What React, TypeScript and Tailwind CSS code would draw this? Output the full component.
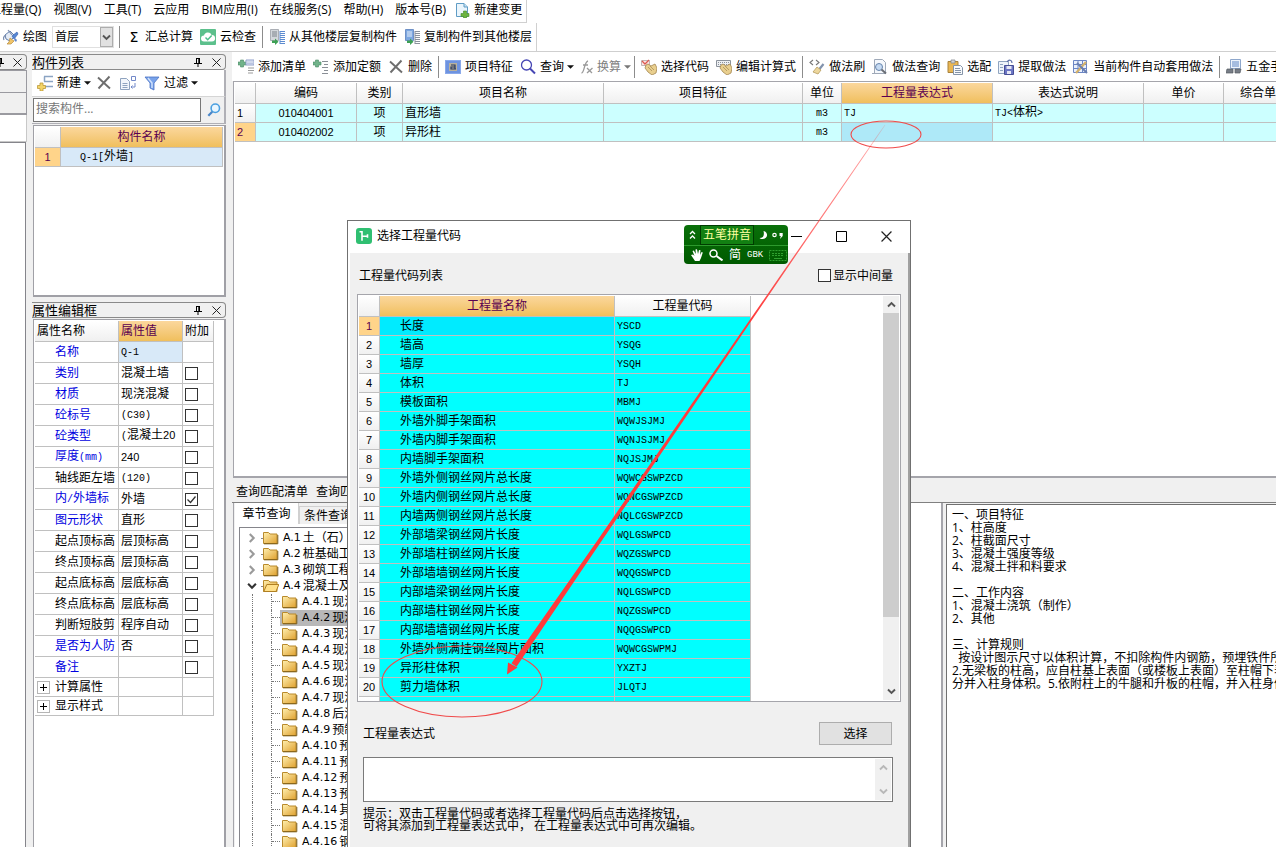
import React from "react";

type IconProps = { children: React.ReactNode; className?: string };

function Ic({ children, className = "h-4 w-4" }: IconProps) {
  return (
    <svg viewBox="0 0 16 16" className={`shrink-0 ${className}`} fill="none" aria-hidden="true">
      {children}
    </svg>
  );
}

const NewDocIcon = () => (
  <Ic>
    <path d="M2.5 1.5h7.5l3.5 3.5v9.500H2.500z" fill="#eaf5fc" stroke="#5f9cc5" />
    <path d="M10 1.500v3.500h3.500" fill="#c5e1f2" stroke="#5f9cc5" />
    <path d="M9.500 9h3v2.500H15v3h-2.500V16h-3v-1.500H7v-3h2.500z" fill="#6cb33f" stroke="#3f8a2a" strokeWidth=".6" />
  </Ic>
);
const DrawIcon = () => (
  <Ic>
    <path d="M2 6l5-4 5 5-5 5-4-2z" fill="#e4ebf5" stroke="#6580ad" />
    <path d="M3 6c-2 1-3 3-2 5M5 1l4 5" stroke="#7c8fb0" strokeWidth="1.200" />
    <path d="M9 7l5-4 1 2-4 5z" fill="#5687d6" stroke="#3b64ad" strokeWidth=".7" />
    <path d="M7 9l4 3-3 3H4l2-2z" fill="#f0c56a" stroke="#b98d3d" strokeWidth=".7" />
    <path d="M12 9l2 2-1 2-2-2z" fill="#5f86c9" />
  </Ic>
);
const CloudCheckIcon = () => (
  <Ic>
    <rect width="16" height="16" rx="1" fill="#5cc08c" />
    <path d="M4 12.500a3 3 0 010-6 4 4 0 017.600-.6A3.300 3.300 0 0112 12.500z" fill="#fff" />
    <path d="M5.500 8.500l2.200 2.200 4-4.200" stroke="#4fbf8b" strokeWidth="1.500" />
  </Ic>
);
const FloorCopyIcon = ({ to = false }: { to?: boolean }) => (
  <Ic>
    <path d="M1.500.5h8v11h-8z" fill={to ? "#7da7e0" : "#d3d7dc"} stroke={to ? "#5a80bd" : "#9a9fa6"} strokeWidth=".8" />
    <path d="M3 3h5M3 5h5M3 7h5" stroke={to ? "#e8f0fb" : "#7d838b"} />
    <path d="M11 2.500h5M11 4.500h5M11 6.500h5M11 8.500h5M11 10.500h5M11 12.500h5M11 14.500h5" stroke={to ? "#8a929c" : "#5d8bd0"} strokeWidth="1.200" />
    <path d="M11 2v13" stroke={to ? "#8a929c" : "#5d8bd0"} />
    <path d="M3 11.500h3v-2l3.500 3.200L6 16v-2H3z" fill="#3ea055" />
  </Ic>
);
const AddListIcon = ({ plain = false }: { plain?: boolean }) => (
  <Ic>
    <path d="M2.500 1h3v2H8v3H5.500v2h-3V6H0V3h2.500z" fill="#71b38a" stroke="#4c8c66" strokeWidth=".6" />
    {plain ? (
      <path d="M9 2.500h6M11 5.500h4M9 8.500h6M11 11.500h4M9 14.500h6" stroke="#8a8f96" strokeWidth="1.200" />
    ) : (
      <>
        <path d="M8 1h8v5H8z" fill="#e7ecf8" stroke="#8f9fca" />
        <path d="M9.500 3h5M9.500 4.500h5" stroke="#8f9fca" strokeDasharray="1 1" />
        <path d="M10 9h6M10 11.500h6M10 14h5" stroke="#9b9b9b" strokeWidth="1.200" />
      </>
    )}
  </Ic>
);
const CrossIcon = () => (
  <Ic>
    <path d="M2 2.500l12 11M13.500 1.500L2.500 13.500" stroke="#6e6e6e" strokeWidth="1.900" />
  </Ic>
);
const FeatureIcon = () => (
  <Ic>
    <rect x=".5" y="1.500" width="15" height="13" fill="#6e93e0" stroke="#8aa9ea" />
    <rect x="4" y="4" width="8" height="8" fill="#b9b19c" />
    <path d="M6 6h4v4M10 8H6v2h5" stroke="#26375f" strokeWidth="1.200" />
  </Ic>
);
const QueryIcon = () => (
  <Ic>
    <circle cx="6.500" cy="6" r="5" stroke="#4646b4" strokeWidth="1.300" />
    <path d="M10 9.500l5 5" stroke="#4646b4" strokeWidth="2" />
  </Ic>
);
const FxIcon = () => (
  <svg viewBox="0 0 12 14" className="h-[14px] w-3 shrink-0" fill="none" aria-hidden="true">
    <path d="M.5 13c3 0 2.500-11 6.500-12M2 5h5" stroke="#9a9a9a" strokeWidth="1.300" />
    <path d="M6 8l5 5M11.500 8l-5.500 5" stroke="#9a9a9a" strokeWidth="1.300" />
  </svg>
);
const HandIcon = ({ grid = false }: { grid?: boolean }) => (
  <Ic>
    {grid ? (
      <>
        <path d="M.5 1.500h14v6H.5z" fill="#eef0f3" stroke="#8b929b" />
        <path d="M2 3.500h11M2 5.500h11" stroke="#8b929b" strokeDasharray="1 1" />
      </>
    ) : (
      <>
        <path d="M.5 1.500h8v5h-8z" fill="#fbe6e4" stroke="#c1b3b3" />
        <path d="M1 2l3 3 4-4" stroke="#dc5a50" strokeWidth="1.300" />
      </>
    )}
    <path d="M5 6l2-1 3 2 4-2 2 4-1 5-4 2-4-3-3-4z" fill="#e9cf8e" stroke="#a38751" strokeWidth=".8" />
    <path d="M7 8l4 4M9 7l4 4" stroke="#a38751" strokeWidth=".7" />
  </Ic>
);
const BrushIcon = () => (
  <Ic>
    <path d="M4 1L1 3.500 4 6M7 1l3 2.500L7 6" stroke="#777" strokeWidth="1.100" />
    <path d="M14.500 5l-4 5" stroke="#8293ad" strokeWidth="2.200" />
    <path d="M8 8l4 3-3 4-5-2z" fill="#edd79d" stroke="#b59a5d" strokeWidth=".8" />
  </Ic>
);
const MethodQueryIcon = () => (
  <Ic>
    <path d="M2.500.5h8l3 3v11h-11z" fill="#f5f8fc" stroke="#9fa9b8" />
    <circle cx="7" cy="8" r="3.500" fill="#c6dbf3" stroke="#6684ac" />
    <path d="M9.500 10.500l4.500 4" stroke="#6b6f76" strokeWidth="2" />
    <path d="M0 14.500h8" stroke="#9fa9b8" />
  </Ic>
);
const PasteIcon = () => (
  <Ic>
    <path d="M1 2.500h10v11H1z" fill="#e9b653" stroke="#a8823c" />
    <path d="M4 1h4v3H4z" fill="#cfd3d8" stroke="#868a90" strokeWidth=".8" />
    <path d="M6.500 6.500h7l2 2v7h-9z" fill="#f8fafc" stroke="#8594a8" />
    <path d="M8 9.500h5M8 11.500h6M8 13.500h6" stroke="#8594a8" />
  </Ic>
);
const ExtractIcon = () => (
  <Ic>
    <path d="M.5 2.500h10v12H.5z" fill="#eef4fb" stroke="#8fa4c0" />
    <path d="M2 5.500h3M2 8.500h3M2 11.500h3" stroke="#8fa4c0" />
    <path d="M6.500 6.500h9v9h-9z" fill="#6c76c4" stroke="#474f96" />
    <path d="M8.500 7h5v3h-5zM9 12h4v3H9z" fill="#e6e8f5" />
    <path d="M9 3c2-3 5-2 5 1" stroke="#5d6fa8" strokeWidth="1.200" />
  </Ic>
);
const AutoIcon = () => (
  <Ic>
    <path d="M.5 1.500h13v12H.5zM.5 5.500h13M.5 9.500h13M5 1.500v12M9.500 1.500v12" stroke="#6c86c4" fill="#eaf0fb" />
    <path d="M3 14L13 3" stroke="#d3b16a" strokeWidth="2.200" />
    <path d="M4 4l10 10" stroke="#6a7fb0" strokeWidth="2" />
  </Ic>
);
const HardwareIcon = () => (
  <Ic>
    <path d="M4.500.5h10v9h-10z" fill="#edf3fb" stroke="#8ea7cc" />
    <path d="M6 3h7M6 5h7M6 7h7" stroke="#5e86c4" />
    <path d="M1 10h6v4H0zM9 10h6l-1 4H9z" fill="#777d86" stroke="#565b63" strokeWidth=".7" />
  </Ic>
);
const NewItemIcon = () => (
  <Ic>
    <path d="M7 1.500h9M7 6.500h9M7 11.500h9M7.500 1.500v5" stroke="#8ba4c3" strokeWidth="1.500" />
    <path d="M3 8h3v2.500h2.500v3H6V16H3v-2.500H.5v-3H3z" fill="#f3d468" stroke="#bd9a3a" strokeWidth=".8" />
  </Ic>
);
const CopyIcon = () => (
  <Ic>
    <path d="M.5 3.500h6l3 3v8h-9z" fill="#f2f6fb" stroke="#8fa3bf" />
    <path d="M2.500 8.500h5M2.500 10.500h5M2.500 12.500h5" stroke="#8fa3bf" />
    <path d="M11.500 1.500h4v4h-4zM15 8v4h-4l1.500-1.500M11 12l1.500 1.500" stroke="#7289c9" />
  </Ic>
);
const FilterIcon = () => (
  <Ic>
    <path d="M1 2h14l-5 6v7l-4-2V8z" fill="#79a3ea" stroke="#4a72c4" strokeWidth=".8" />
    <path d="M4 3l4 5v5" stroke="#d3e3fb" strokeWidth="1.400" />
  </Ic>
);
const SearchIcon = () => (
  <Ic className="h-3.5 w-3.5">
    <circle cx="9.500" cy="6" r="4.800" fill="#e9f6ff" stroke="#4a9fe0" strokeWidth="1.800" />
    <path d="M6 10l-4.500 4.500" stroke="#4a86c8" strokeWidth="2.600" />
  </Ic>
);
const PinIcon = () => (
  <svg viewBox="0 0 8 9" className="h-[9px] w-2" fill="none" aria-hidden="true">
    <path d="M2 .5h4M2.500 0v5M5.500 0v5M4.800 0v5M0 5.500h8M4 5.500V9" stroke="#000" />
  </svg>
);
const CloseIcon = ({ className = "h-[9px] w-[9px]" }: { className?: string }) => (
  <svg viewBox="0 0 10 10" className={className} fill="none" aria-hidden="true">
    <path d="M.5.5l9 9M9.500.5l-9 9" stroke="#222" strokeWidth="1.100" />
  </svg>
);
const Caret = ({ gray = false }: { gray?: boolean }) => (
  <svg viewBox="0 0 8 4" className="-ml-px h-1 w-[7px] shrink-0" aria-hidden="true">
    <path d="M0 0h8L4 4z" fill={gray ? "#777" : "#111"} />
  </svg>
);
const Chevron = ({ dir, color = "#555", className = "h-[9px] w-[9px]" }: { dir: "up" | "down" | "right"; color?: string; className?: string }) => (
  <svg viewBox="0 0 9 9" className={className} fill="none" aria-hidden="true">
    <path d={dir === "up" ? "M1 6.500l3.500-3.500L8 6.500" : dir === "down" ? "M1 2.500L4.500 6 8 2.500" : "M2.500 1L6 4.500 2.500 8"} stroke={color} strokeWidth="1.900" />
  </svg>
);
const FolderIcon = ({ open = false }: { open?: boolean }) => (
  <Ic>
    <defs>
      <linearGradient id="folderFill" x1="0" y1="0" x2="1" y2="1">
        <stop offset="0" stopColor="#fff0b0" />
        <stop offset="1" stopColor="#dfa02e" />
      </linearGradient>
    </defs>
    <path d="M.5 13.500v-11h5l1.500 1.500h7v9.500z" fill="url(#folderFill)" stroke="#b98a2c" />
    {open && <path d="M.8 13.500l3-7h12l-2.800 7z" fill="#ffe08a" stroke="#b07f22" />}
    {!open && <path d="M1 13.800h13.800V5" stroke="#7a5a14" />}
  </Ic>
);
const AppIcon = () => (
  <Ic>
    <rect width="16" height="16" rx="3" fill="#2fbf71" />
    <path d="M3.500 3.800h2.500v9M6 8.300h6M11.500 6.300v3.500" stroke="#fff" strokeWidth="1.600" />
  </Ic>
);

/* Half-width characters advance by half a Chinese glyph: figures in a plain face, other runs in a fixed-pitch one. */
function Mixed({ text }: { text: string }) {
  return (
    <>
      {text.split(/([\x21-\x7e]+)/).map((part, i) => {
        if (/^\d+$/.test(part)) {
          return (
            <span key={i} className="font-['Liberation_Sans',sans-serif] text-[11px]">
              {part}
            </span>
          );
        }
        if (/^[\x21-\x7e]+$/.test(part)) {
          return (
            <span key={i} className="font-['Liberation_Mono',monospace] text-[10px]">
              {part}
            </span>
          );
        }
        return part;
      })}
    </>
  );
}

const menus = ["视图(V)", "工具(T)", "云应用", "BIM应用(I)", "在线服务(S)", "帮助(H)", "版本号(B)"];

const Sep = () => <span className="-mx-px h-[22px] w-px shrink-0 bg-[#8c8c8c]" />;

type ToolProps = { icon?: React.ReactNode; label: string; caret?: boolean; disabled?: boolean };
function Tool({ icon, label, caret, disabled }: ToolProps) {
  return (
    <button disabled={disabled} className="flex shrink-0 items-center gap-1 whitespace-nowrap disabled:text-[#808080]">
      {icon}
      <span>{label}</span>
      {caret && <Caret gray={disabled} />}
    </button>
  );
}

function PanelTitle({ text }: { text: string }) {
  return (
    <div className="flex h-4 shrink-0 items-center overflow-hidden rounded-r-sm border border-l-0 border-[#8a8a8a] bg-[#f0f0f0] pr-1 text-[13px] leading-[14px]">
      <span className="flex-1">{text}</span>
      <button aria-label="固定" className="mr-2.5">
        <PinIcon />
      </button>
      <button aria-label="关闭">
        <CloseIcon />
      </button>
    </div>
  );
}

const headGray = "bg-gradient-to-b from-white to-[#f0f0f0]";
const headGold = "bg-gradient-to-b from-[#fbd79c] to-[#f0bf5c] text-[#5a0050]";
const cell = "border-r border-b border-[#c0c0c0] overflow-hidden whitespace-nowrap p-0 font-normal";

const props: { name: string; value: string; blue?: boolean; box?: boolean; checked?: boolean }[] = [
  { name: "名称", value: "Q-1", blue: true, box: false },
  { name: "类别", value: "混凝土墙", blue: true },
  { name: "材质", value: "现浇混凝", blue: true },
  { name: "砼标号", value: "(C30)", blue: true },
  { name: "砼类型", value: "(混凝土20", blue: true },
  { name: "厚度(mm)", value: "240", blue: true },
  { name: "轴线距左墙", value: "(120)" },
  { name: "内/外墙标", value: "外墙", blue: true, checked: true },
  { name: "图元形状", value: "直形", blue: true },
  { name: "起点顶标高", value: "层顶标高" },
  { name: "终点顶标高", value: "层顶标高" },
  { name: "起点底标高", value: "层底标高" },
  { name: "终点底标高", value: "层底标高" },
  { name: "判断短肢剪", value: "程序自动" },
  { name: "是否为人防", value: "否", blue: true },
  { name: "备注", value: "", blue: true },
];

function CheckBox({ label, checked = false }: { label: string; checked?: boolean }) {
  return (
    <span className="relative block h-[13px] w-[13px] shrink-0">
      <input
        type="checkbox"
        aria-label={label}
        defaultChecked={checked}
        className="peer block h-[13px] w-[13px] appearance-none border border-[#333] bg-white"
      />
      <svg viewBox="0 0 13 13" className="pointer-events-none absolute inset-0 hidden h-[13px] w-[13px] peer-checked:block" fill="none" aria-hidden="true">
        <path d="M2.500 6.500L5.500 9.500l5-6" stroke="#333" strokeWidth="1.300" />
      </svg>
    </span>
  );
}

function PropertyTable() {
  return (
    <table className="w-[179px] table-fixed border-separate border-spacing-0">
      <colgroup>
        <col className="w-[84px]" />
        <col className="w-16" />
        <col className="w-[31px]" />
      </colgroup>
      <thead>
        <tr className="h-[21px] text-left">
          <th className={`${cell} ${headGray} pl-0.5`}>属性名称</th>
          <th className={`${cell} ${headGold} pl-0.5`}>属性值</th>
          <th className={`${cell} ${headGray} pl-0.5`}>附加</th>
        </tr>
      </thead>
      <tbody>
        {props.map((p, i) => (
          <tr key={p.name} className="h-[21px]">
            <td className={`${cell} pl-5 ${p.blue ? "text-[#0000e0]" : ""}`}>
              <Mixed text={p.name} />
            </td>
            <td className={`${cell} pl-0.5 ${i === 0 ? "bg-[#d8e9f8]" : ""}`}>
              <Mixed text={p.value} />
            </td>
            <td className={`${cell} pl-0.5`}>{p.box !== false && <CheckBox label={p.name} checked={p.checked} />}</td>
          </tr>
        ))}
        {["计算属性", "显示样式"].map((n) => (
          <tr key={n} className="h-[19px]">
            <td className={`${cell} pl-0.5`}>
              <div className="flex items-center gap-[5px]">
                <button aria-label={`展开${n}`} className="flex h-[13px] w-[13px] items-center justify-center border border-[#b5b5b5]">
                  <svg viewBox="0 0 7 7" className="h-[7px] w-[7px]" aria-hidden="true">
                    <path d="M0 3.500h7M3.500 0v7" stroke="#000" />
                  </svg>
                </button>
                {n}
              </div>
            </td>
            <td className={cell} />
            <td className={cell} />
          </tr>
        ))}
      </tbody>
    </table>
  );
}

function SidePanels() {
  return (
    <aside className="flex w-[194px] shrink-0 flex-col pt-0.5">
      <PanelTitle text="构件列表" />
      <div className="flex h-[27px] items-center border-r-2 border-b border-[#b0b0b6] border-b-[#d5d5d5] bg-white pl-[5px]">
        <Tool icon={<NewItemIcon />} label="新建" caret />
        <div className="flex items-center gap-2 pl-[5px]">
          <button aria-label="删除">
            <CrossIcon />
          </button>
          <button aria-label="复制">
            <CopyIcon />
          </button>
          <Tool icon={<FilterIcon />} label="过滤" caret />
        </div>
      </div>
      <div className="flex h-[27px] items-center border-r-2 border-b border-[#b0b0b6] pl-px">
        <input
          aria-label="搜索构件"
          placeholder="搜索构件..."
          className="h-6 w-[168px] border border-[#777] bg-white px-0.5 pb-1 text-[12px] outline-none placeholder:text-[#777]"
        />
        <button aria-label="搜索" className="ml-1.5">
          <SearchIcon />
        </button>
      </div>
      <div className="mt-px ml-px h-[172px] border border-r-2 border-b-2 border-[#a0a0a6] bg-white pt-px pl-px">
        <table className="w-[188px] table-fixed border-separate border-spacing-0">
          <thead>
            <tr className="h-[21px]">
              <th className={`${cell} ${headGray} w-[26px]`} />
              <th className={`${cell} ${headGold}`}>构件名称</th>
            </tr>
          </thead>
          <tbody>
            <tr className="h-[19px]">
              <td className={`${cell} bg-[#ffd48a] text-center text-[#5a0050]`}>
                <Mixed text="1" />
              </td>
              <td className={`${cell} bg-[#d8e9f8] pl-[19px]`}>
                <Mixed text="Q-1[外墙]" />
              </td>
            </tr>
          </tbody>
        </table>
      </div>
      <div className="h-[5px] shrink-0" />
      <PanelTitle text="属性编辑框" />
      <div className="mt-px ml-px flex-1 border border-r-2 border-b-0 border-[#a0a0a6] bg-white pt-px pl-px">
        <PropertyTable />
      </div>
    </aside>
  );
}

const costHeads = ["", "编码", "类别", "项目名称", "项目特征", "单位", "工程量表达式", "表达式说明", "单价", "综合单价"];
const costRows = [
  ["1", "010404001", "项", "直形墙", "", "m3", "TJ", "TJ<体积>", "", ""],
  ["2", "010402002", "项", "异形柱", "", "m3", "", "", "", ""],
];

function CostTable() {
  return (
    <table className="w-[1070px] table-fixed border-separate border-spacing-0">
      <colgroup>
        <col className="w-[21px]" />
        <col className="w-[101px]" />
        <col className="w-[46px]" />
        <col className="w-[201px]" />
        <col className="w-[199px]" />
        <col className="w-[39px]" />
        <col className="w-[151px]" />
        <col className="w-[151px]" />
        <col className="w-[80px]" />
        <col className="w-[81px]" />
      </colgroup>
      <thead>
        <tr className="h-[21px]">
          {costHeads.map((h, i) => (
            <th key={i} className={`${cell} ${i === 6 ? headGold : headGray}`}>
              {h}
            </th>
          ))}
        </tr>
      </thead>
      <tbody>
        {costRows.map((row, r) => (
          <tr key={r} className="h-[19px]">
            {row.map((v, c) => {
              const bg =
                c === 0 ? (r === 1 ? "bg-[#ffd48a] text-[#5a0050]" : headGray) : r === 1 && c === 6 ? "bg-[#aee9f8]" : "bg-[#ccffff]";
              const align = c === 1 || c === 2 || c === 5 ? "text-center" : "pl-0.5 text-left";
              return (
                <td key={c} className={`${cell} ${bg} ${align}`}>
                  <Mixed text={v} />
                </td>
              );
            })}
          </tr>
        ))}
      </tbody>
    </table>
  );
}

const chapters: [string, string][] = [
  ["A.1", "土（石）方工程"],
  ["A.2", "桩基础工程"],
  ["A.3", "砌筑工程"],
  ["A.4", "混凝土及钢筋混凝土"],
];
const sections = [
  "现浇混凝土基础",
  "现浇混凝土柱",
  "现浇混凝土梁",
  "现浇混凝土墙",
  "现浇混凝土板",
  "现浇混凝土楼梯",
  "现浇混凝土其他",
  "后浇带",
  "预制混凝土柱",
  "预制混凝土梁",
  "预制混凝土屋架",
  "预制混凝土板",
  "预制混凝土楼梯",
  "其他预制构件",
  "混凝土构筑物",
  "钢筋工程",
];

function ChapterTree() {
  return (
    <ul className="pt-0.5 whitespace-nowrap">
      {chapters.map(([no, name], i) => (
        <li key={no} className="flex h-4 items-center pl-[7px]">
          <Chevron dir={i === 3 ? "down" : "right"} color={i === 3 ? "#333" : "#9a9a9a"} className="h-[10px] w-[10px]" />
          <span className="ml-1 w-0.5 border-b border-dotted border-[#888]" />
          <FolderIcon open={i === 3} />
          <span className="ml-1 font-['DejaVu_Sans',sans-serif] text-[11px]">{no}</span>
          <span className="ml-0.5">{name}</span>
        </li>
      ))}
      {sections.map((name, i) => (
        <li key={i} className="flex h-4 items-center pl-3">
          <span className="h-4 w-[19px] shrink-0 border-l border-dotted border-[#777]" />
          <span className="h-4 w-[9px] shrink-0 border-l border-dotted border-[#777]">
            <span className="block h-2 border-b border-dotted border-[#777]" />
          </span>
          <span className={`flex h-4 flex-1 items-center pl-0.5 ${i === 1 ? "bg-[#b8b8b8]" : ""}`}>
            <FolderIcon />
            <span className="ml-1 font-['DejaVu_Sans',sans-serif] text-[11px]">{`A.4.${i + 1}`}</span>
            <span className="ml-0.5">{name}</span>
          </span>
        </li>
      ))}
    </ul>
  );
}

const notes = `一、项目特征
1、柱高度
2、柱截面尺寸
3、混凝土强度等级
4、混凝土拌和料要求

二、工作内容
1、混凝土浇筑（制作）
2、其他

三、计算规则
  按设计图示尺寸以体积计算，不扣除构件内钢筋，预埋铁件所占体积。
2.无梁板的柱高，应自柱基上表面（或楼板上表面）至柱帽下表面
分并入柱身体积。5.依附柱上的牛腿和升板的柱帽，并入柱身体积`;

const codes: [string, string][] = [
  ["长度", "YSCD"],
  ["墙高", "YSQG"],
  ["墙厚", "YSQH"],
  ["体积", "TJ"],
  ["模板面积", "MBMJ"],
  ["外墙外脚手架面积", "WQWJSJMJ"],
  ["外墙内脚手架面积", "WQNJSJMJ"],
  ["内墙脚手架面积", "NQJSJMJ"],
  ["外墙外侧钢丝网片总长度", "WQWCGSWPZCD"],
  ["外墙内侧钢丝网片总长度", "WQNCGSWPZCD"],
  ["内墙两侧钢丝网片总长度", "NQLCGSWPZCD"],
  ["外部墙梁钢丝网片长度", "WQLGSWPCD"],
  ["外部墙柱钢丝网片长度", "WQZGSWPCD"],
  ["外部墙墙钢丝网片长度", "WQQGSWPCD"],
  ["内部墙梁钢丝网片长度", "NQLGSWPCD"],
  ["内部墙柱钢丝网片长度", "NQZGSWPCD"],
  ["内部墙墙钢丝网片长度", "NQQGSWPCD"],
  ["外墙外侧满挂钢丝网片面积", "WQWCGSWPMJ"],
  ["异形柱体积", "YXZTJ"],
  ["剪力墙体积", "JLQTJ"],
  ["", ""],
];

function ImeBar() {
  return (
    <div className="absolute top-1 left-[336px] flex h-[39px] w-[104px] flex-col rounded bg-gradient-to-b from-[#0a700a] to-[#005a00] text-white">
      <div className="flex h-[21px] items-center border-b border-[#2d9a2d]">
        <svg viewBox="0 0 16 20" className="h-5 w-4" fill="none" aria-hidden="true">
          <path d="M6 9l2.500-2.500L11 9M6 13.500L8.500 11l2.500 2.500" stroke="#fff" strokeWidth="1.300" />
        </svg>
        <span className="flex h-5 w-[54px] items-center justify-center border border-[#003c00] bg-[#128012] text-[12px] text-[#ffffa0]">五笔拼音</span>
        <svg viewBox="0 0 34 20" className="h-5 w-[34px]" fill="none" aria-hidden="true">
          <path d="M9.500 6c5 1 5 8-1.500 8-1 0-2-.5-2.500-1 4 0 5-3 4-7z" fill="#fff" />
          <circle cx="20.500" cy="10" r="1.700" stroke="#fff" strokeWidth="1.200" />
          <path d="M25.500 8h3.200v3l-2.700 3 .8-3h-1.300z" fill="#fff" />
        </svg>
      </div>
      <div className="flex h-[18px] items-center gap-1.5 pl-[7px] text-[12px] leading-none">
        <svg viewBox="0 0 12 12" className="h-3 w-3" aria-hidden="true">
          <path d="M4 12L0 6l2-.5L3.500 7 1.500 2l1.300-.5L4.800 5 4.500.5 6 .3 7 5 8 1l1.500.3L9 6l1.500-3 1.300.6L10 9l-1.500 3z" fill="#fff" />
        </svg>
        <svg viewBox="0 0 14 12" className="h-3 w-3.5" fill="none" aria-hidden="true">
          <circle cx="4.500" cy="4.500" r="3.500" stroke="#fff" strokeWidth="1.500" />
          <path d="M7.500 7l6 4.500" stroke="#fff" strokeWidth="2" />
        </svg>
        <span>简</span>
        <span className="w-4 font-['Liberation_Mono',monospace] text-[9px]">GBK</span>
        <svg viewBox="0 0 18 11" className="h-[11px] w-[18px]" fill="none" aria-hidden="true">
          <path d="M.5.5h17v10H.5zM3 3.500h12M3 5.500h12" stroke="#2fa02f" strokeDasharray="2 1" />
          <path d="M5 8.500h8" stroke="#2fa02f" />
        </svg>
      </div>
    </div>
  );
}

function CodeDialog() {
  return (
    <div role="dialog" aria-label="选择工程量代码" className="absolute top-[220px] bottom-0 left-[347px] flex w-[564px] flex-col border border-b-0 border-[#707070] bg-white">
      <ImeBar />
      <div className="flex h-8 shrink-0 items-center pr-[18px] pb-0.5 pl-2">
        <AppIcon />
        <span className="ml-[5px] flex-1">选择工程量代码</span>
        <button aria-label="最小化" className="w-[45px]">
          <svg viewBox="0 0 11 11" className="h-[11px] w-[11px]" aria-hidden="true">
            <path d="M0 5.500h11" stroke="#000" />
          </svg>
        </button>
        <button aria-label="最大化" className="w-[45px]">
          <svg viewBox="0 0 11 11" className="h-[11px] w-[11px]" fill="none" aria-hidden="true">
            <path d="M.5.5h10v10H.5z" stroke="#000" />
          </svg>
        </button>
        <button aria-label="关闭">
          <CloseIcon className="h-[11px] w-[11px]" />
        </button>
      </div>
      <div className="ml-0.5 flex flex-1 flex-col border-r-2 border-[#a0a0a0] bg-[#f0f0f0]">
        <div className="flex h-[41px] shrink-0 items-center justify-between pt-1 pr-[15px] pl-[9px]">
          <span>工程量代码列表</span>
          <label className="flex items-center gap-0.5">
            <CheckBox label="显示中间量" />
            显示中间量
          </label>
        </div>
        <div className="ml-[7px] mr-[7px] flex h-[408px] shrink-0 justify-between overflow-hidden border border-[#a5a5ab] bg-white p-px">
          <table className="h-fit w-[392px] table-fixed border-separate border-spacing-0">
            <thead>
              <tr className="h-[21px]">
                <th className={`${cell} ${headGray} w-[21px]`} />
                <th className={`${cell} ${headGold} w-[235px]`}>工程量名称</th>
                <th className={`${cell} ${headGray}`}>工程量代码</th>
              </tr>
            </thead>
            <tbody>
              {codes.map(([name, code], i) => (
                <tr key={i} className="h-[19px]">
                  <td className={`${cell} text-center ${i === 0 ? "bg-[#ffd48a] text-[#5a0050]" : headGray}`}>
                    {name && <Mixed text={String(i + 1)} />}
                  </td>
                  <td className={`${cell} pl-5 ${i === 0 ? "bg-[#00ebff]" : "bg-[#00ffff]"}`}>{name}</td>
                  <td className={`${cell} bg-[#00ffff] pl-0.5`}>
                    <Mixed text={code} />
                  </td>
                </tr>
              ))}
            </tbody>
          </table>
          <div className="flex w-4 flex-col items-center bg-[#f0f0f0]">
            <button aria-label="向上滚动" className="flex h-[17px] items-center">
              <Chevron dir="up" />
            </button>
            <div className="h-[304px] w-full bg-[#cdcdcd]" />
            <button aria-label="向下滚动" className="mt-auto flex h-[17px] items-center">
              <Chevron dir="down" />
            </button>
          </div>
        </div>
        <div className="flex h-[55px] shrink-0 items-center justify-between pt-2 pr-4 pl-[13px]">
          <label htmlFor="expression">工程量表达式</label>
          <button className="h-[23px] w-[73px] border border-[#adadad] bg-[#e1e1e1]">选择</button>
        </div>
        <div className="ml-[13px] mr-[15px] flex h-[45px] shrink-0 border border-[#7a7a7a] bg-white p-px">
          <textarea id="expression" className="min-w-0 flex-1 resize-none outline-none" />
          <div className="flex w-4 flex-col items-center justify-between bg-[#f0f0f0] py-1">
            <Chevron dir="up" color="#b8b8b8" />
            <Chevron dir="down" color="#b8b8b8" />
          </div>
        </div>
        <p className="mt-1.5 pl-[13px] leading-3 whitespace-pre-line">
          {"提示：双击工程量代码或者选择工程量代码后点击选择按钮，\n可将其添加到工程量表达式中， 在工程量表达式中可再次编辑。"}
        </p>
      </div>
    </div>
  );
}

function Annotations() {
  return (
    <svg className="pointer-events-none absolute top-0 left-0 h-[847px] w-[1276px]" fill="none" aria-hidden="true">
      <ellipse cx="886" cy="134.500" rx="35" ry="13.500" stroke="#f04a4a" strokeWidth="1.100" />
      <ellipse cx="462" cy="681.500" rx="80" ry="35.500" stroke="#f04a4a" strokeWidth="1.100" />
      <defs>
        <linearGradient id="shaft" gradientUnits="userSpaceOnUse" x1="885" y1="125" x2="750" y2="321">
          <stop offset="0" stopColor="#ff3b3b" stopOpacity=".15" />
          <stop offset=".15" stopColor="#ff3b3b" stopOpacity=".5" />
          <stop offset="1" stopColor="#ff3b3b" />
        </linearGradient>
      </defs>
      <path
        d="M884.700 124.800L780.400 275.600 687.300 410.300 597.700 539.900 511.500 663.300 516.500 666.700 600.900 542.100 689.500 411.700 781.600 276.400 885.300 125.200z"
        fill="url(#shaft)"
      />
      <path d="M508 662.500L507 674.500l10.500-7z" fill="#ff3b3b" />
    </svg>
  );
}

export default function App() {
  return (
    <div className="relative flex h-screen flex-col overflow-hidden bg-white font-['Open_Sans','Noto_Sans_CJK_SC',sans-serif] text-[12px] leading-[16px] text-black">
      <nav className="flex h-[23px] w-fit items-center gap-2 border-r border-b border-[#d0d0d0] pr-1 pb-0.5 whitespace-nowrap">
        <div className="flex gap-3">
          <button className="-ml-[11px]">工程量(Q)</button>
          {menus.map((m) => (
            <button key={m}>{m}</button>
          ))}
        </div>
        <Tool icon={<NewDocIcon />} label="新建变更" />
      </nav>
      <div className="flex h-7 w-fit items-center gap-[7px] border-r border-[#d0d0d0] pr-1 pl-[3px]">
        <div className="flex items-center gap-[5px]">
          <Tool icon={<DrawIcon />} label="绘图" />
          <div className="relative flex h-[22px] w-[62px] border border-[#e0e0e0]">
            <select aria-label="楼层" className="w-full appearance-none bg-white pl-0.5 outline-none">
              <option>首层</option>
            </select>
            <span className="pointer-events-none absolute inset-y-0 right-0 flex w-[13px] items-center justify-center border border-[#adadad] bg-[#e1e1e1]">
              <Chevron dir="down" />
            </span>
          </div>
          <span className="h-[22px] w-px bg-[#8c8c8c]" />
        </div>
        <Tool icon={<span className="w-3.5 text-center font-['DejaVu_Sans',sans-serif] text-[14px]">Σ</span>} label="汇总计算" />
        <Tool icon={<CloudCheckIcon />} label="云检查" />
        <Sep />
        <Tool icon={<FloorCopyIcon />} label="从其他楼层复制构件" />
        <Tool icon={<FloorCopyIcon to />} label="复制构件到其他楼层" />
      </div>
      <div className="h-px shrink-0 bg-[#cfcfcf]" />

      <main className="flex min-h-0 flex-1 bg-[#f0f0f0]">
        <aside className="flex w-[27px] shrink-0 flex-col pt-0.5">
          <div className="flex h-4 items-center justify-between overflow-hidden rounded-r-sm border border-l-0 border-[#8a8a8a] pr-1">
            <button aria-label="固定" className="-ml-1">
              <PinIcon />
            </button>
            <button aria-label="关闭">
              <CloseIcon />
            </button>
          </div>
          <div className="h-[23px] border-t border-r border-b border-[#9a9aa0]" />
          <div className="h-[22px] border-r border-b-2 border-[#9a9aa0]" />
          <div className="h-[27px] border-r border-b border-[#c8c8c8] bg-white" />
          <div className="mr-px flex-1 border-t border-r border-[#85858b] bg-white" />
        </aside>
        <div className="w-[5px] shrink-0" />
        <SidePanels />
        <div className="w-1.5 shrink-0" />

        <section className="flex min-w-0 flex-1 flex-col">
          <div className="flex h-[29px] shrink-0 items-center gap-[7px] overflow-hidden bg-white pl-1.5">
            <Tool icon={<AddListIcon />} label="添加清单" />
            <Tool icon={<AddListIcon plain />} label="添加定额" />
            <Tool icon={<CrossIcon />} label="删除" />
            <Sep />
            <Tool icon={<FeatureIcon />} label="项目特征" />
            <Tool icon={<QueryIcon />} label="查询" caret />
            <div className="flex shrink-0 items-center gap-1">
              <Tool icon={<FxIcon />} label="换算" caret disabled />
              <Sep />
            </div>
            <Tool icon={<HandIcon />} label="选择代码" />
            <Tool icon={<HandIcon grid />} label="编辑计算式" />
            <Sep />
            <Tool icon={<BrushIcon />} label="做法刷" />
            <Tool icon={<MethodQueryIcon />} label="做法查询" />
            <Tool icon={<PasteIcon />} label="选配" />
            <Tool icon={<ExtractIcon />} label="提取做法" />
            <Tool icon={<AutoIcon />} label="当前构件自动套用做法" />
            <Sep />
            <Tool icon={<HardwareIcon />} label="五金手册" />
          </div>
          <div className="ml-px h-[397px] shrink-0 overflow-hidden border-t border-b-2 border-l border-[#a5a5ab] bg-white pt-px pl-px">
            <CostTable />
          </div>
          <div className="flex h-[25px] shrink-0 items-center gap-2 border-b border-[#808080] pt-1 pl-1">
            <button>查询匹配清单</button>
            <button>查询匹配定额</button>
          </div>
          <div className="flex min-h-0 flex-1">
            <div className="ml-px flex w-[710px] shrink-0 border-r-2 border-l border-[#a5a5ab] bg-white">
              <div className="flex w-[400px] flex-col bg-[#f0f0f0] pl-px">
                <div className="flex h-[21px] shrink-0 items-end">
                  <button className="h-[21px] w-16 border-r border-[#d0d0d0] bg-white">章节查询</button>
                  <button className="h-[18px] border border-b-0 border-[#d0d0d0] px-1">条件查询</button>
                </div>
                <div className="min-h-0 flex-1 overflow-hidden bg-white pt-[3px] pl-1">
                  <div className="h-full overflow-hidden border-t border-l border-[#85858b]">
                    <ChapterTree />
                  </div>
                </div>
              </div>
            </div>
            <div className="w-[3px] shrink-0" />
            <div className="mt-px min-w-0 flex-1 overflow-hidden border-t border-l border-[#707070] bg-white pt-[3px] pl-[5px]">
              <div className="leading-[13px] whitespace-pre">{notes}</div>
            </div>
          </div>
        </section>
      </main>

      <CodeDialog />
      <Annotations />
    </div>
  );
}
